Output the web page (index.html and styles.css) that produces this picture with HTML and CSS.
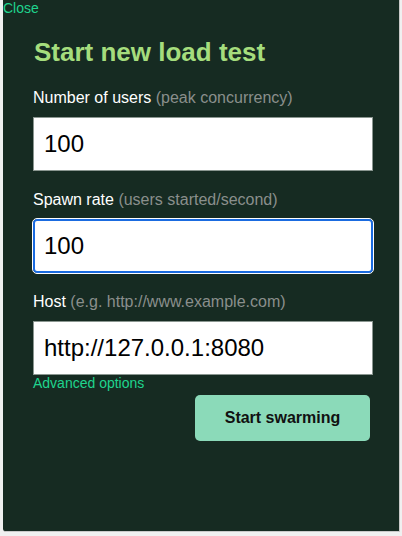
FILE: index.html
```html
<!DOCTYPE html>
<html>
<head>
<meta charset="utf-8">
<link rel="stylesheet" href="styles.css">
</head>
<body>
<div class="dialog">
  <a class="close" href="#">Close</a>
  <div class="content">
    <h2 class="title">Start new load test</h2>
    <div class="field">
      <label class="label">Number of users <span class="hint">(peak concurrency)</span></label>
      <div class="input">100</div>
    </div>
    <div class="field">
      <label class="label">Spawn rate <span class="hint">(users started/second)</span></label>
      <div class="input focused">100</div>
    </div>
    <div class="field last">
      <label class="label">Host <span class="hint">(e.g. http://www.example.com)</span></label>
      <div class="input">http://127.0.0.1:8080</div>
    </div>
    <a class="advanced" href="#">Advanced options</a>
    <div class="actions">
      <button class="submit">Start swarming</button>
    </div>
  </div>
</div>
</body>
</html>
```
FILE: styles.css
```css
html, body {
  margin: 0;
  padding: 0;
  background: #f0f0f0;
  font-family: "Liberation Sans", Arial, sans-serif;
}
.dialog {
  position: relative;
  margin-left: 3px;
  width: 397px;
  height: 532px;
  background: #162b22;
  border-right: 1px solid #c9c9c9;
  border-bottom: 1px solid #c9c9c9;
  border-bottom-left-radius: 3px;
  box-sizing: border-box;
}
.close {
  position: absolute;
  left: 0;
  top: 0;
  font-size: 14px;
  line-height: 16px;
  color: #1fd48e;
  text-decoration: none;
}
.content {
  padding: 36px 26px 0 30px;
  display: flex;
  flex-direction: column;
}
.title {
  margin: 0 0 20px 1px;
  font-size: 26px;
  line-height: 32px;
  font-weight: bold;
  color: #a5dd7d;
}
.field {
  display: flex;
  flex-direction: column;
  margin-bottom: 19px;
}
.field.last {
  margin-bottom: 0;
}
.label {
  font-size: 16px;
  line-height: 20px;
  color: #ffffff;
  margin-bottom: 9px;
}
.hint {
  color: #8a8f8c;
}
.input {
  height: 54px;
  box-sizing: border-box;
  background: #ffffff;
  border: 1px solid #8a9690;
  padding: 0 10px;
  display: flex;
  align-items: center;
  font-size: 24px;
  color: #000;
}
.input.focused {
  border: 2px solid #1a6be0;
  border-radius: 4px;
  padding: 0 9px;
  outline: 1px solid #ffffff;
}
.advanced {
  font-size: 14px;
  line-height: 16px;
  color: #1fd48e;
  text-decoration: none;
  align-self: flex-start;
}
.actions {
  display: flex;
  justify-content: flex-end;
  margin-top: 4px;
  padding-right: 3px;
}
.submit {
  width: 175px;
  height: 46px;
  border: none;
  border-radius: 5px;
  background: #8bdab9;
  font-family: "Liberation Sans", Arial, sans-serif;
  font-size: 16px;
  font-weight: bold;
  color: #111;
}
```
